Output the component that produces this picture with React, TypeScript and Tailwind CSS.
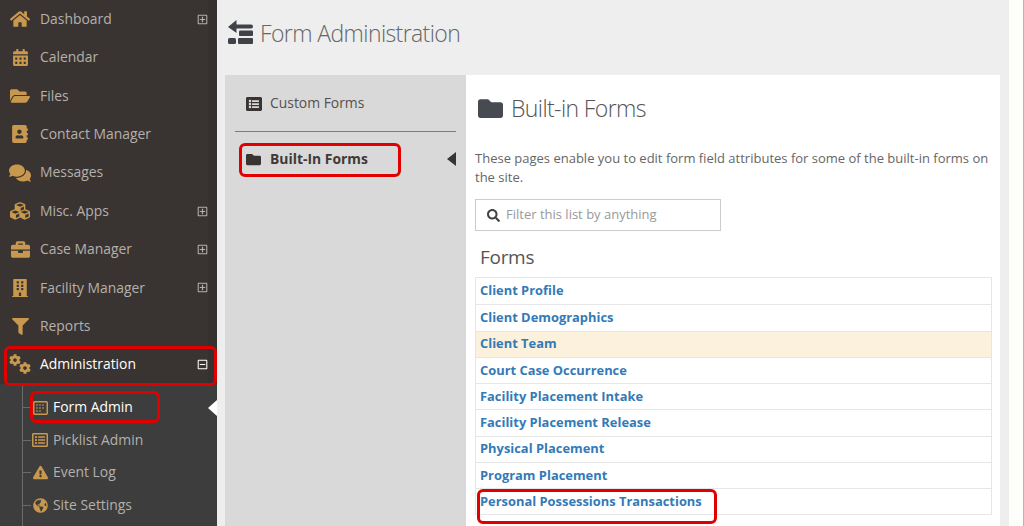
import React from 'react';
import {
  FaHome,
  FaCalendarAlt,
  FaFolderOpen,
  FaAddressBook,
  FaComments,
  FaCubes,
  FaBriefcase,
  FaBuilding,
  FaFilter,
  FaCog,
  FaRegListAlt,
  FaExclamationTriangle,
  FaGlobeAmericas,
  FaFolder,
  FaSearch,
  FaListAlt,
  FaRegPlusSquare,
  FaRegMinusSquare,
} from 'react-icons/fa';

const FormIcon = ({ className }: { className?: string }) => (
  <svg width="15" height="14" viewBox="0 0 15 14" className={className}>
    <rect x="0.75" y="0.75" width="13.5" height="12.5" rx="1" fill="none" stroke="currentColor" strokeWidth="1.5" />
    <path d="M3 4h9M3 7h9M3 10h6" stroke="currentColor" strokeWidth="1" strokeDasharray="2 1" />
  </svg>
);

const mainItems = [
  { label: 'Dashboard', icon: FaHome, plus: true, size: 'text-[20px]' },
  { label: 'Calendar', icon: FaCalendarAlt, plus: false, size: 'text-[17px]' },
  { label: 'Files', icon: FaFolderOpen, plus: false, size: 'text-[20px]' },
  { label: 'Contact Manager', icon: FaAddressBook, plus: false, size: 'text-[18px]' },
  { label: 'Messages', icon: FaComments, plus: false, size: 'text-[22px]' },
  { label: 'Misc. Apps', icon: FaCubes, plus: true, size: 'text-[20px]' },
  { label: 'Case Manager', icon: FaBriefcase, plus: true, size: 'text-[19px]' },
  { label: 'Facility Manager', icon: FaBuilding, plus: true, size: 'text-[18px]' },
  { label: 'Reports', icon: FaFilter, plus: false, size: 'text-[17px]' },
];

const subItems = [
  { label: 'Form Admin', icon: FormIcon, active: true, size: '' },
  { label: 'Picklist Admin', icon: FaRegListAlt, active: false, size: 'text-[16px]' },
  { label: 'Event Log', icon: FaExclamationTriangle, active: false, size: 'text-[15px]' },
  { label: 'Site Settings', icon: FaGlobeAmericas, active: false, size: 'text-[15px]' },
];

const forms = [
  'Client Profile',
  'Client Demographics',
  'Client Team',
  'Court Case Occurrence',
  'Facility Placement Intake',
  'Facility Placement Release',
  'Physical Placement',
  'Program Placement',
  'Personal Possessions Transactions',
];

const callout = 'absolute z-10 border-[3px] border-[#e00000] rounded-[6px] pointer-events-none';

const Sidebar = () => (
  <div className="w-[217px] h-full shrink-0 flex flex-col bg-[#393432] overflow-hidden">
    <div className="flex flex-col border-r-[9px] border-[#36312f]">
      {mainItems.map((item) => (
        <div key={item.label} className="h-[38.4px] flex items-center relative">
          <div className="w-[40px] flex justify-center shrink-0 text-[#c9984f]">
            <item.icon className={item.size} />
          </div>
          <span className="text-[13.9px] text-[#b5b0ab]">{item.label}</span>
          {item.plus && <FaRegPlusSquare className="ml-auto text-[11px] text-[#b5b0ab]" />}
        </div>
      ))}
      <div className="h-[38.4px] flex items-center relative">
        <div className="w-[40px] shrink-0 relative h-[24px] text-[#c9984f]">
          <FaCog className="absolute left-[9px] top-[1px] text-[12px]" />
          <FaCog className="absolute left-[19px] top-[9px] text-[12px]" />
        </div>
        <span className="text-[13.9px] text-white">Administration</span>
        <FaRegMinusSquare className="ml-auto text-[11px] text-white" />
        <div className={`${callout} left-[4px] right-[-9px] top-0 h-[40px]`} />
      </div>
    </div>
    <div className="flex-1 bg-[#3d3d3d] flex flex-col pt-[7.5px] relative">
      <div className="absolute left-[22px] top-0 bottom-0 w-px bg-[#6a6a6a]" />
      {subItems.map((item) => (
        <div key={item.label} className="h-[32.5px] flex items-center relative">
          <div className="w-[9px] h-px bg-[#6a6a6a] ml-[22px] shrink-0 absolute" />
          <div className="ml-[30px] w-[20px] mr-[3px] flex justify-center shrink-0 text-[#c9984f]">
            <item.icon className={item.size} />
          </div>
          <span className={`text-[13.9px] ${item.active ? 'text-white' : 'text-[#b5b0ab]'}`}>{item.label}</span>
          {item.active && (
            <>
              <div className={`${callout} left-[30px] top-0 w-[130px] h-[32px]`} />
              <div className="absolute right-0 w-0 h-0 border-y-[8px] border-y-transparent border-r-[9px] border-r-white" />
            </>
          )}
        </div>
      ))}
    </div>
  </div>
);

const LeftTabs = () => (
  <div className="w-[241px] shrink-0 bg-[#d9d9d9] px-[10px] text-[#3f3a38]">
    <div className="h-[57px] border-b border-[#7c7c7c] flex items-center pl-[11px] pt-[1px]">
      <FaListAlt className="text-[16px] mr-[8px] text-[#393432]" />
      <span className="text-[13.9px] text-[#55504d]">Custom Forms</span>
    </div>
    <div className="h-[54px] flex items-center pl-[11px] relative">
      <FaFolder className="text-[15px] mr-[9px] text-[#393432]" />
      <span className="text-[13.9px] font-bold">Built-In Forms</span>
      <div className="absolute right-0 w-0 h-0 border-y-[7px] border-y-transparent border-r-[9px] border-r-[#393432]" />
      <div className={`${callout} left-[4px] top-[11px] w-[162px] h-[34px]`} />
    </div>
  </div>
);

const FormsList = () => (
  <div className="flex-1 bg-white pl-[9px] pr-[8px] min-w-0">
    <div className="h-[67px] flex items-center">
      <FaFolder className="ml-[3px] text-[25px] mr-[8px] text-[#474a50]" />
      <span className="text-[23px] font-light text-[#555] tracking-[-0.6px]">Built-in Forms</span>
    </div>
    <p className="mt-[7px] text-[13px] leading-[19px] text-[#666]">
      These pages enable you to edit form field attributes for some of the built-in forms on the site.
    </p>
    <div className="mt-[12px] w-[246px] h-[32px] border border-[#ccc] flex items-center pl-[11px]">
      <FaSearch className="text-[13px] text-[#444] mr-[6px]" />
      <span className="text-[13px] text-[#999]">Filter this list by anything</span>
    </div>
    <h2 className="mt-[12px] ml-[5px] text-[19px] leading-[28px] font-normal text-[#555] tracking-[-0.3px]">Forms</h2>
    <div className="mt-[6px] border border-[#e6e6e6] relative">
      {forms.map((name, i) => (
        <div
          key={name}
          className={`h-[26.25px] flex items-center pl-[4px] text-[12.9px] font-bold text-[#337ab7] ${
            i > 0 ? 'border-t border-[#e6e6e6]' : ''
          } ${name === 'Client Team' ? 'bg-[#fcf1dc]' : ''}`}
        >
          {name}
        </div>
      ))}
      <div className={`${callout} left-[1px] top-[211px] w-[240px] h-[35px]`} />
    </div>
  </div>
);

const App = () => (
  <div className="w-[1024px] h-[526px] flex overflow-hidden bg-white font-['Open_Sans',sans-serif]">
    <Sidebar />
    <div className="w-[792px] h-full shrink-0 bg-[#eeeeee] pl-[8px] pr-[9px] flex flex-col">
      <div className="h-[75px] shrink-0 flex items-center pb-[9px]">
        <svg width="25" height="26" viewBox="0 0 25 26" className="ml-[3px] mr-[7px] fill-[#3f4348]">
          <path d="M0 7 L8.5 0 V4.5 H23 a1.5 1.5 0 0 1 0 4 H8.5 V13 Z" />
          <rect x="11" y="10.5" width="14" height="5.5" rx="1" />
          <rect x="0" y="18" width="8" height="6" rx="1.5" />
          <rect x="10" y="18" width="15" height="6" rx="1" />
        </svg>
        <span className="text-[23px] font-light text-[#666] tracking-[-0.6px]">Form Administration</span>
      </div>
      <div className="flex-1 flex min-h-0">
        <LeftTabs />
        <FormsList />
      </div>
    </div>
    <div className="flex-1 bg-[#fdfdfa] border-r border-[#b5b5b5]" />
  </div>
);

export default App;
